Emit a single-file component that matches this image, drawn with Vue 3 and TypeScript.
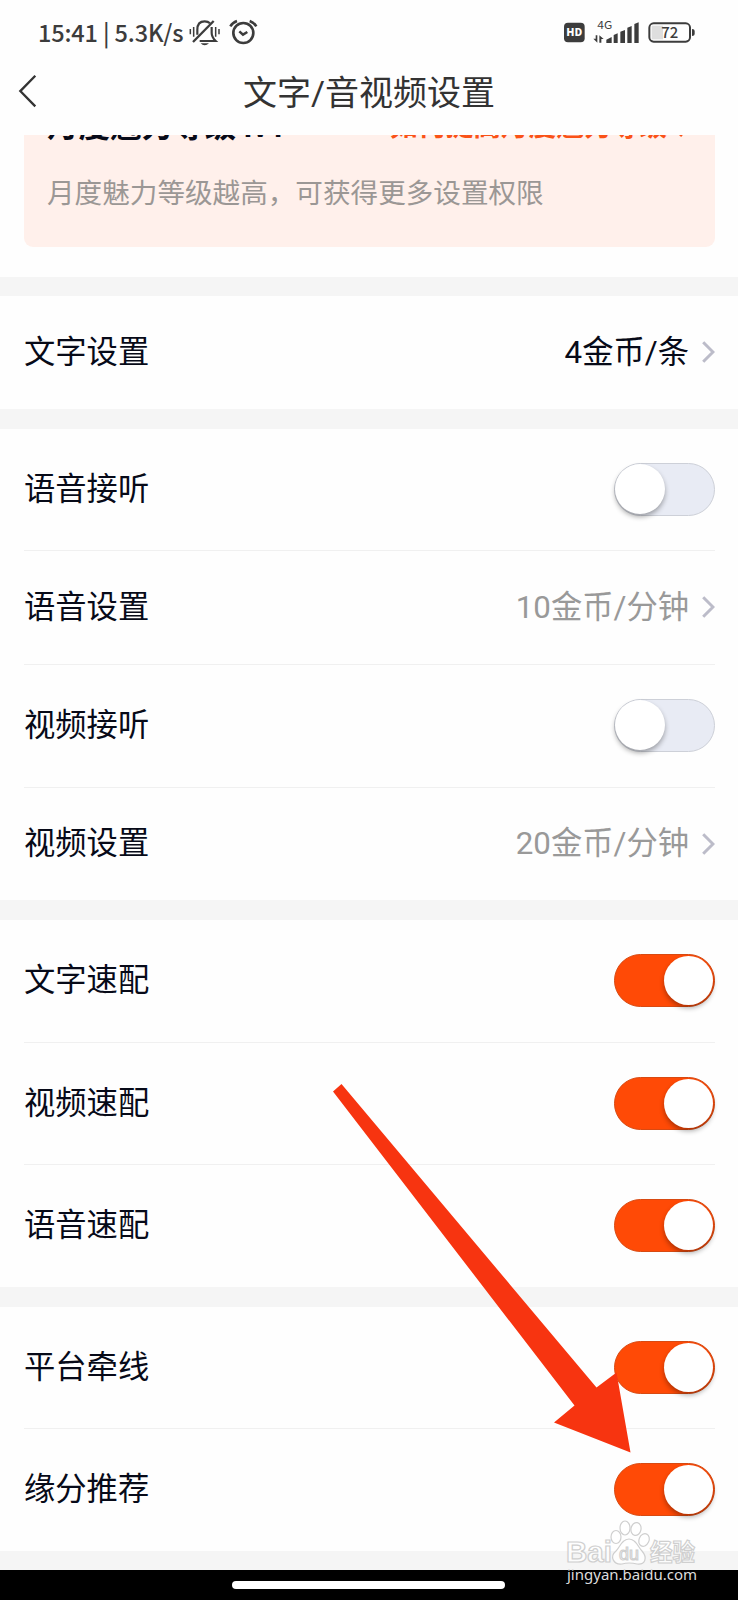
<script setup lang="ts">
import { reactive } from 'vue'

interface Row {
  label: string
  height: number
  kind: 'value' | 'toggle'
  value?: string
  muted?: boolean
  on?: boolean
}

const groups = reactive<Row[][]>([
  [{ label: '文字设置', height: 113, kind: 'value', value: '4金币/条' }],
  [
    { label: '语音接听', height: 122, kind: 'toggle', on: false },
    { label: '语音设置', height: 114, kind: 'value', value: '10金币/分钟', muted: true },
    { label: '视频接听', height: 123, kind: 'toggle', on: false },
    { label: '视频设置', height: 112, kind: 'value', value: '20金币/分钟', muted: true },
  ],
  [
    { label: '文字速配', height: 123, kind: 'toggle', on: true },
    { label: '视频速配', height: 122, kind: 'toggle', on: true },
    { label: '语音速配', height: 122, kind: 'toggle', on: true },
  ],
  [
    { label: '平台牵线', height: 122, kind: 'toggle', on: true },
    { label: '缘分推荐', height: 122, kind: 'toggle', on: true },
  ],
])
</script>

<template>
  <div class="screen">
    <header class="top">
      <div class="status">
        <span class="clock">15:41 | 5.3K/s</span>
        <svg class="left-icons" viewBox="565 50 210 90" fill="none" stroke="#3c3c3c" stroke-width="6">
          <path d="M572 86v16M582 80v29M648 80v29M658 86v16" stroke-width="4.5" />
          <path d="M593 103V88C593 71 602 63 615 63C622 63 627 65 631 69M636 80V98C636 109 640 114 648 122H600" stroke-width="6.5" />
          <path d="M580 125L642 62" stroke-width="7" />
          <path d="M603 129H628Q622 135 615 135T603 129Z" fill="#3c3c3c" stroke="none" />
          <circle cx="731" cy="98" r="30" stroke-width="8" />
          <path d="M692 78Q698 67 712 62M750 62Q764 67 770 78" stroke-width="7.5" />
          <path d="M719 93L730 103L743 95" stroke-width="7.5" />
        </svg>
        <svg class="right-icons" viewBox="580 50 410 90" fill="#3c3c3c">
          <rect x="589" y="67" width="62" height="59" rx="12" />
          <text x="596" y="108" font-size="32" font-weight="800" textLength="48" lengthAdjust="spacingAndGlyphs" fill="#fff">HD</text>
          <text x="689" y="87" font-size="33" font-weight="400" textLength="45" lengthAdjust="spacingAndGlyphs">4G</text>
          <path d="M684 105H689V127L677 115H684ZM695 127V105L708 116H701V127Z" />
          <path d="M716 128V118L732 110V128ZM738 128V104L750 99V128ZM758 128V94L772 89V128ZM779 128V82L792 77V128ZM800 128V71L813 66V128Z" />
          <rect x="852" y="76" width="34" height="41" fill="#dedede" />
          <rect x="845" y="69" width="122" height="55" rx="13" fill="none" stroke="#3c3c3c" stroke-width="6" />
          <path d="M973 86Q981 86 981 92V101Q981 107 973 107Z" />
          <text x="881" y="114.5" font-size="46" font-weight="500" textLength="51" lengthAdjust="spacingAndGlyphs">72</text>
        </svg>
      </div>
      <div class="nav">
        <svg class="back" viewBox="0 0 20 34" fill="none" stroke="#333" stroke-width="2.3">
          <path d="M17.3 1.8L2.3 17.1L17.3 32.4" />
        </svg>
        <h1>文字/音视频设置</h1>
      </div>
    </header>

    <section class="intro">
      <div class="card">
        <div class="card-head">
          <strong>月度魅力等级 lv1</strong>
          <span class="link">如何提高月度魅力等级
            <svg viewBox="0 0 10 18" fill="none" stroke="#fa5217" stroke-width="3"><path d="M1 1L8 9L1 17" /></svg>
          </span>
        </div>
        <p>月度魅力等级越高，可获得更多设置权限</p>
      </div>
    </section>

    <main>
      <section v-for="(group, g) in groups" :key="g" class="group">
        <div v-for="row in group" :key="row.label" class="row" :style="{ height: row.height + 'px' }">
          <span class="label">{{ row.label }}</span>
          <span v-if="row.kind === 'value'" class="value" :class="{ muted: row.muted }">
            {{ row.value }}
            <svg viewBox="0 0 14 24" fill="none" stroke="#bcbcc9" stroke-width="3"><path d="M2.2 2.2L12 12L2.2 21.8" /></svg>
          </span>
          <button v-else class="switch" :class="{ on: row.on }" type="button" role="switch" :aria-checked="row.on" @click="row.on = !row.on">
            <i></i>
          </button>
        </div>
      </section>
    </main>

    <footer class="home"><span></span></footer>

    <svg class="arrow" viewBox="0 0 300 371" fill="#f73410">
      <path d="M0 7.5L8.5 0L263.5 303.5L283.5 288.5L297.5 368.5L221 338.5L241.5 321.5Z" />
    </svg>

    <svg class="watermark" viewBox="0 0 140 72">
      <g fill="#fff" fill-opacity=".75" stroke="#cfcfcf" stroke-width="1.2">
        <text x="4" y="43" font-size="29" font-weight="700" textLength="46" lengthAdjust="spacingAndGlyphs">Bai</text>
        <ellipse cx="54" cy="18" rx="5" ry="6.5" />
        <ellipse cx="63" cy="9" rx="5" ry="7" />
        <ellipse cx="74" cy="10" rx="5" ry="6.5" transform="rotate(12 74 10)" />
        <ellipse cx="82" cy="21" rx="5" ry="6.5" transform="rotate(25 82 21)" />
        <path d="M67 20C60 20 58 28 54 32C47 38 52 46 60 45Q67 43 75 45C83 46 86 39 80 32C76 28 74 20 67 20Z" />
        <text x="57" y="41" font-size="19" textLength="20" lengthAdjust="spacingAndGlyphs">du</text>
        <text x="88" y="41.5" class="cjk" font-size="24" font-weight="700" textLength="45" lengthAdjust="spacingAndGlyphs">经验</text>
      </g>
      <text x="5" y="60.5" class="url" font-size="15" fill="#dcdcdc" textLength="130" lengthAdjust="spacingAndGlyphs">jingyan.baidu.com</text>
    </svg>
  </div>
</template>

<style scoped>
.screen {
  position: relative;
  width: 738px;
  height: 1600px;
  overflow: hidden;
  background: #fefefe;
  color: #070a18;
  font-family: Roboto, "Noto Sans CJK SC", sans-serif;
}
.top {
  height: 135px;
  background: #fefefe;
}
.status {
  display: flex;
  align-items: center;
  height: 63px;
  padding: 0 40px 0 38px;
  color: #3c3c3c;
}
.clock {
  width: 150.3px;
  font: 500 23.5px/30px "Noto Sans CJK SC", sans-serif;
  letter-spacing: -0.15px;
  white-space: pre;
}
.left-icons {
  width: 70px;
  height: 30px;
}
.right-icons {
  width: 136.7px;
  height: 30px;
  margin-left: auto;
  font-family: "Noto Sans CJK SC", sans-serif;
}
.nav {
  display: flex;
  align-items: center;
  height: 56px;
  padding-left: 18px;
}
.back {
  width: 20px;
  height: 34px;
  margin-top: -1px;
}
h1 {
  flex: 1;
  margin: 4px 38px 0 0;
  text-align: center;
  color: #333;
  font: 400 34px/56px Roboto, "Noto Sans CJK SC", sans-serif;
}
.intro {
  height: 142px;
  padding: 0 23px 0 24px;
  overflow: hidden;
  box-sizing: border-box;
}
.card {
  height: 177px;
  margin-top: -65px;
  padding: 36px 24px 0 23px;
  box-sizing: border-box;
  border-radius: 9px;
  background: #fff0eb;
}
.card-head {
  display: flex;
  justify-content: space-between;
  align-items: center;
  height: 34px;
  white-space: nowrap;
}
.card-head strong {
  font-size: 31.5px;
}
.link {
  display: flex;
  align-items: center;
  gap: 12px;
  margin: 2px 2px 0 0;
  color: #fa5217;
  font-size: 27.7px;
  font-weight: 700;
}
.link svg {
  width: 10px;
  height: 18px;
  margin-top: 7px;
}
.card p {
  margin: 29px 0 0;
  font-size: 27.6px;
  line-height: 50px;
  white-space: nowrap;
  color: #9b9795;
}
.group {
  padding: 0 23px 0 24px;
  border-top: 20px solid #f5f5f5;
}
.group:first-child {
  border-top-width: 19px;
}
.row {
  display: flex;
  align-items: center;
  justify-content: space-between;
  box-sizing: border-box;
  border-bottom: 1px solid #f0f0f0;
}
.row:last-child {
  border-bottom: 0;
}
.label,
.value {
  font-size: 31.3px;
  line-height: 46px;
}
.value {
  display: flex;
  align-items: center;
  gap: 12px;
}
.value.muted {
  color: #999;
}
.value svg {
  width: 14px;
  height: 24px;
  margin-top: -1px;
}
.switch {
  width: 101px;
  height: 53px;
  margin-top: -1px;
  padding: 0 1px 1px 0;
  display: flex;
  box-sizing: border-box;
  border: 1px solid #cdd0d8;
  border-radius: 27px;
  background: #e8ebf4;
}
.switch i {
  width: 50px;
  height: 50px;
  border-radius: 50%;
  background: #fff;
  box-shadow: 0 3px 5px rgba(0, 0, 0, 0.32);
}
.switch.on {
  justify-content: flex-end;
  border-color: #d84a12;
  background: #ff4a06;
}
.switch.on i {
  width: 49px;
  height: 49px;
  margin-top: 1px;
}
.home {
  height: 30px;
  border-top: 19px solid #f5f5f5;
  background: #000;
  display: flex;
  justify-content: center;
}
.home span {
  width: 273px;
  height: 8px;
  margin: 11px 1px 0 0;
  border-radius: 4px;
  background: #fff;
}
.arrow {
  position: absolute;
  left: 333px;
  top: 1084px;
  width: 300px;
  height: 371px;
}
.watermark {
  position: absolute;
  left: 562px;
  top: 1519px;
  width: 140px;
  height: 72px;
  font-family: "Liberation Sans", sans-serif;
}
.watermark .cjk {
  font-family: "Noto Sans CJK SC", sans-serif;
}
.watermark .url {
  font-family: "Noto Sans", sans-serif;
}
</style>

<style>
body {
  margin: 0;
}
</style>
